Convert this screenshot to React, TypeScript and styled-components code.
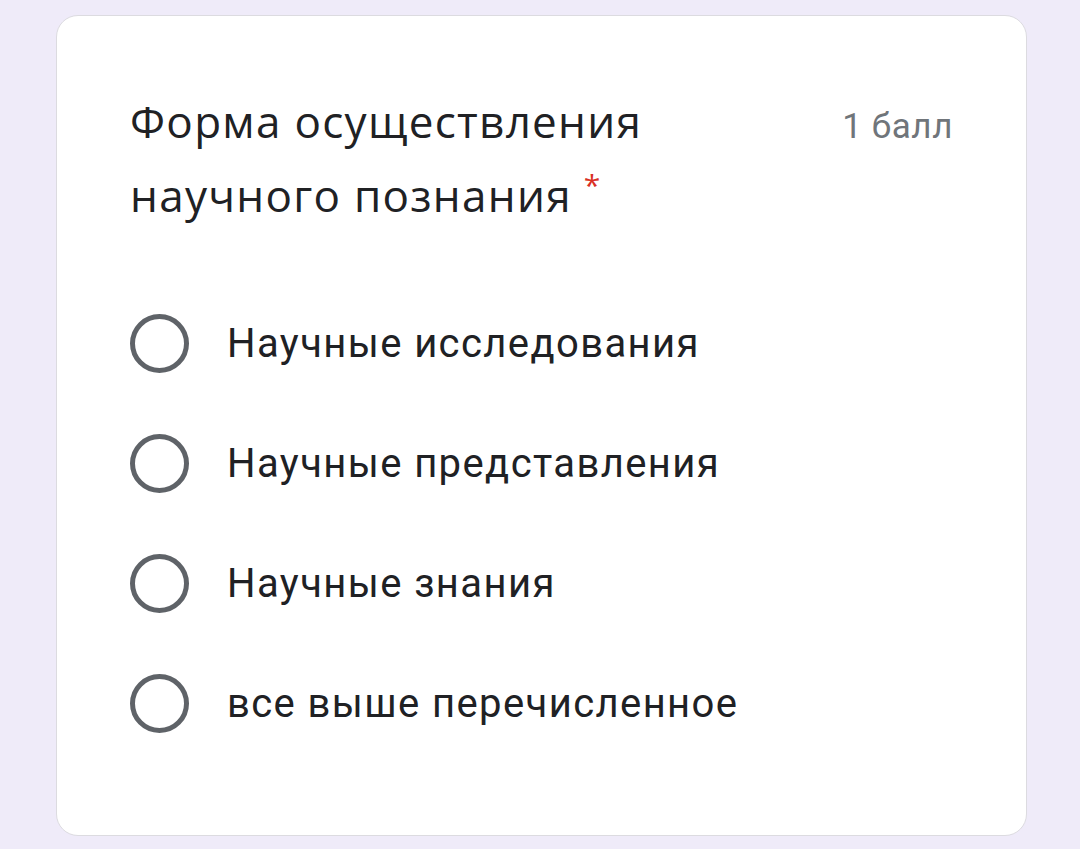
import styled, { createGlobalStyle } from "styled-components";

const Global = createGlobalStyle`
  html, body {
    margin: 0;
    padding: 0;
    background: #efebf9;
  }
`;

const Page = styled.main`
  box-sizing: border-box;
  width: 1080px;
  height: 849px;
  padding: 15px 53px 13px 56px;
  background: #efebf9;
`;

const Card = styled.section`
  box-sizing: border-box;
  height: 100%;
  background: #fff;
  border: 1.5px solid #dcdbe0;
  border-radius: 22px;
  padding: 68px 73px 0 73px;
`;

const Header = styled.header`
  display: flex;
  justify-content: space-between;
  gap: 40px;
`;

const Title = styled.h2`
  flex: 1;
  margin: 0;
  font-family: "Open Sans", "Noto Sans", sans-serif;
  font-weight: 400;
  font-size: 44px;
  letter-spacing: 1.3px;
  line-height: 74px;
  color: #202124;
`;

const Required = styled.sup`
  color: #d93025;
  font-size: 30px;
  line-height: 0;
  margin-left: 12px;
`;

const Points = styled.span`
  padding-top: 6px;
  font-family: Roboto, "Liberation Sans", sans-serif;
  font-size: 35px;
  letter-spacing: 0.6px;
  line-height: 74px;
  color: #70757a;
  white-space: nowrap;
`;

const Options = styled.ul`
  list-style: none;
  margin: 51px 0 0;
  padding: 0;
`;

const Option = styled.li`
  display: flex;
  align-items: center;
  height: 120px;
  gap: 38px;
`;

const Radio = styled.span`
  box-sizing: border-box;
  flex: none;
  width: 59px;
  height: 59px;
  border: 5px solid #5f6368;
  border-radius: 50%;
`;

const Label = styled.span`
  font-family: Roboto, "Liberation Sans", sans-serif;
  font-size: 40px;
  letter-spacing: 1.4px;
  color: #202124;
`;

const answers = [
  "Научные исследования",
  "Научные представления",
  "Научные знания",
  "все выше перечисленное",
];

export default function App() {
  return (
    <Page>
      <Global />
      <Card>
        <Header>
          <Title>
            Форма осуществления научного познания
            <Required>*</Required>
          </Title>
          <Points>1 балл</Points>
        </Header>
        <Options>
          {answers.map((a) => (
            <Option key={a}>
              <Radio />
              <Label>{a}</Label>
            </Option>
          ))}
        </Options>
      </Card>
    </Page>
  );
}
